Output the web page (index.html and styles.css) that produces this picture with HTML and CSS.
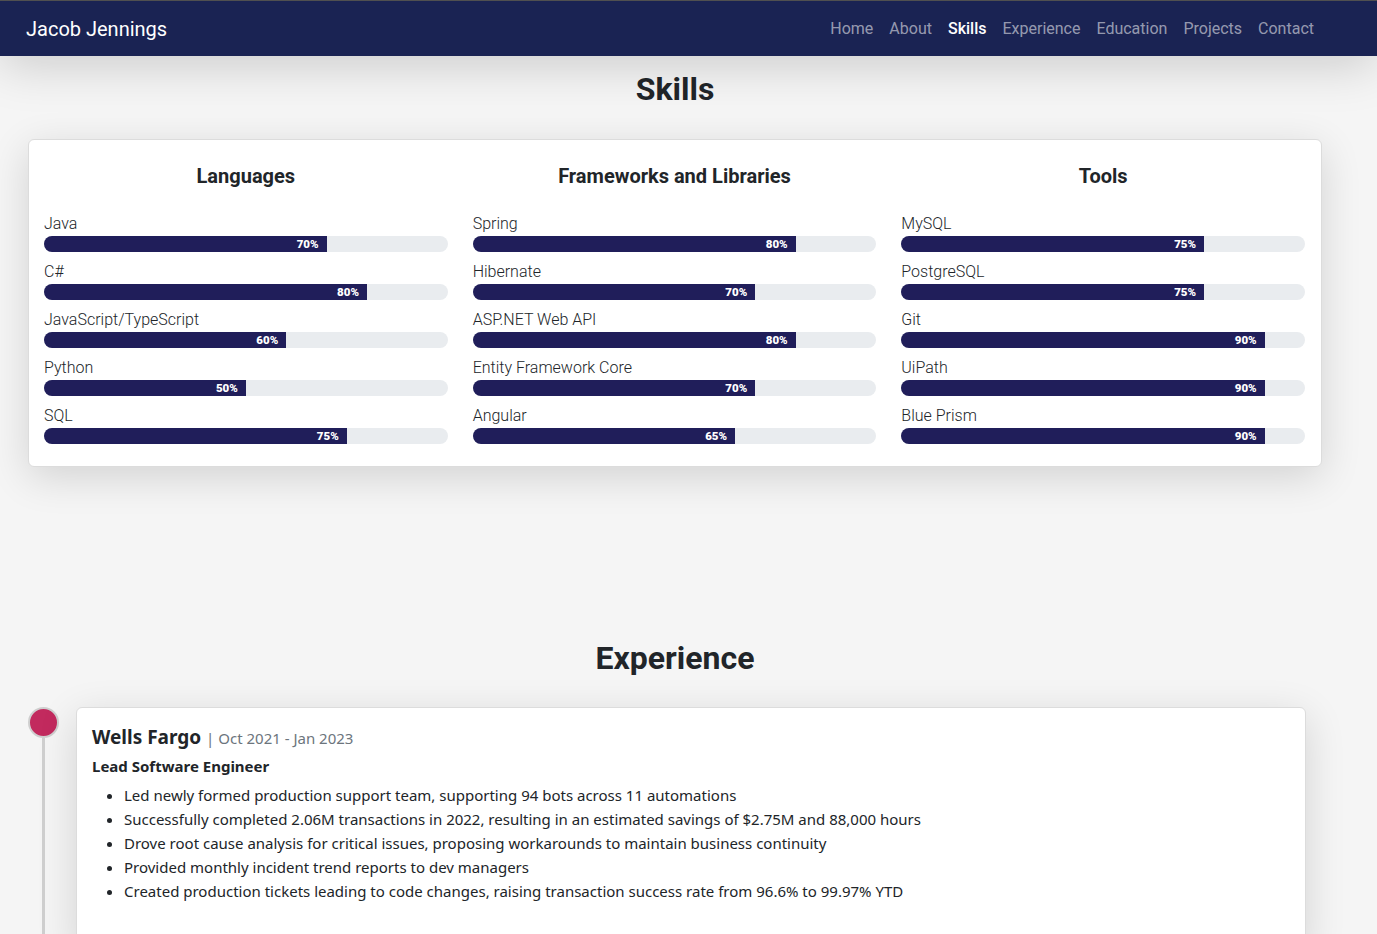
FILE: index.html
```html
<!DOCTYPE html>
<html lang="en">
<head>
<meta charset="utf-8">
<title>Jacob Jennings</title>
<link rel="stylesheet" href="styles.css">
</head>
<body>
<nav class="navbar">
  <a class="brand" href="#">Jacob Jennings</a>
  <ul class="nav-links">
    <li><a href="#">Home</a></li>
    <li><a href="#">About</a></li>
    <li><a class="active" href="#">Skills</a></li>
    <li><a href="#">Experience</a></li>
    <li><a href="#">Education</a></li>
    <li><a href="#">Projects</a></li>
    <li><a href="#">Contact</a></li>
  </ul>
</nav>

<main class="container">
  <section class="skills">
    <h2 class="section-title">Skills</h2>
    <div class="skills-card">
      <div class="skill-col">
        <h3 class="col-title">Languages</h3>
        <div class="skill"><div class="skill-name">Java</div><div class="track"><div class="fill" style="width:70%"><span>70%</span></div></div></div>
        <div class="skill"><div class="skill-name">C#</div><div class="track"><div class="fill" style="width:80%"><span>80%</span></div></div></div>
        <div class="skill"><div class="skill-name">JavaScript/TypeScript</div><div class="track"><div class="fill" style="width:60%"><span>60%</span></div></div></div>
        <div class="skill"><div class="skill-name">Python</div><div class="track"><div class="fill" style="width:50%"><span>50%</span></div></div></div>
        <div class="skill"><div class="skill-name">SQL</div><div class="track"><div class="fill" style="width:75%"><span>75%</span></div></div></div>
      </div>
      <div class="skill-col">
        <h3 class="col-title">Frameworks and Libraries</h3>
        <div class="skill"><div class="skill-name">Spring</div><div class="track"><div class="fill" style="width:80%"><span>80%</span></div></div></div>
        <div class="skill"><div class="skill-name">Hibernate</div><div class="track"><div class="fill" style="width:70%"><span>70%</span></div></div></div>
        <div class="skill"><div class="skill-name">ASP.NET Web API</div><div class="track"><div class="fill" style="width:80%"><span>80%</span></div></div></div>
        <div class="skill"><div class="skill-name">Entity Framework Core</div><div class="track"><div class="fill" style="width:70%"><span>70%</span></div></div></div>
        <div class="skill"><div class="skill-name">Angular</div><div class="track"><div class="fill" style="width:65%"><span>65%</span></div></div></div>
      </div>
      <div class="skill-col">
        <h3 class="col-title">Tools</h3>
        <div class="skill"><div class="skill-name">MySQL</div><div class="track"><div class="fill" style="width:75%"><span>75%</span></div></div></div>
        <div class="skill"><div class="skill-name">PostgreSQL</div><div class="track"><div class="fill" style="width:75%"><span>75%</span></div></div></div>
        <div class="skill"><div class="skill-name">Git</div><div class="track"><div class="fill" style="width:90%"><span>90%</span></div></div></div>
        <div class="skill"><div class="skill-name">UiPath</div><div class="track"><div class="fill" style="width:90%"><span>90%</span></div></div></div>
        <div class="skill"><div class="skill-name">Blue Prism</div><div class="track"><div class="fill" style="width:90%"><span>90%</span></div></div></div>
      </div>
    </div>
  </section>

  <section class="experience">
    <h2 class="section-title">Experience</h2>
    <div class="timeline-item">
      <div class="marker">
        <div class="dot"></div>
        <div class="line"></div>
      </div>
      <div class="exp-card">
        <h4 class="company">Wells Fargo <span class="dates">| Oct 2021 - Jan 2023</span></h4>
        <p class="role">Lead Software Engineer</p>
        <ul class="duties">
          <li>Led newly formed production support team, supporting 94 bots across 11 automations</li>
          <li>Successfully completed 2.06M transactions in 2022, resulting in an estimated savings of $2.75M and 88,000 hours</li>
          <li>Drove root cause analysis for critical issues, proposing workarounds to maintain business continuity</li>
          <li>Provided monthly incident trend reports to dev managers</li>
          <li>Created production tickets leading to code changes, raising transaction success rate from 96.6% to 99.97% YTD</li>
        </ul>
      </div>
    </div>
  </section>
</main>
</body>
</html>
```

FILE: styles.css
```css
* { box-sizing: border-box; }

body {
  margin: 0;
  background: #f5f5f5;
  font-family: Roboto, "Liberation Sans", sans-serif;
  color: #212529;
}

.navbar {
  position: relative;
  z-index: 2;
  height: 56px;
  border-top: 1px solid #505050;
  background: #1a2353;
  display: flex;
  align-items: center;
  justify-content: space-between;
  padding: 0 55px 0 26px;
  box-shadow: 0 8px 50px rgba(0, 0, 0, 0.18);
}

.brand {
  color: #fff;
  font-size: 20px;
  text-decoration: none;
  line-height: 30px;
}

.nav-links {
  list-style: none;
  margin: 0;
  padding: 0;
  display: flex;
}

.nav-links a {
  display: block;
  padding: 0 8px;
  font-size: 16px;
  line-height: 24px;
  color: rgba(255, 255, 255, 0.55);
  text-decoration: none;
}

.nav-links li:first-child a {
  padding-left: 6px;
}

.nav-links a.active {
  color: #fff;
  font-weight: 500;
}

.container {
  width: 1294px;
  margin-left: 28px;
}

.section-title {
  margin: 0;
  text-align: center;
  font-size: 32px;
  line-height: 38px;
  font-weight: 700;
  color: #212529;
}

.skills .section-title {
  padding-top: 14px;
  margin-bottom: 31px;
}

.skills-card {
  background: #fff;
  border: 1px solid #dcdcdc;
  border-radius: 6px;
  box-shadow: 0 10px 40px rgba(0, 0, 0, 0.14);
  padding: 25px 16px 22px 15px;
  display: grid;
  grid-template-columns: repeat(3, 1fr);
  column-gap: 25px;
}

.col-title {
  margin: -1px 0 24px;
  text-align: center;
  font-size: 20px;
  line-height: 24px;
  font-weight: 700;
}

.skill + .skill {
  margin-top: 8px;
}

.skill-name {
  font-size: 16px;
  line-height: 24px;
  font-weight: 300;
}

.track {
  height: 16px;
  background: #e9ecef;
  border-radius: 8px;
  overflow: hidden;
  display: flex;
}

.fill {
  height: 100%;
  background: #201e5a;
  display: flex;
  justify-content: flex-end;
  align-items: center;
  padding-right: 8px;
}

.fill span {
  color: #fff;
  font-size: 11.5px;
  font-weight: 900;
  line-height: 16px;
}

.experience {
  padding-top: 172px;
}

.experience .section-title {
  margin-bottom: 30px;
}

.timeline-item {
  display: flex;
}

.marker {
  width: 48px;
  flex: none;
  display: flex;
  flex-direction: column;
}

.dot {
  width: 31px;
  height: 31px;
  border-radius: 50%;
  background: #c22a5e;
  border: 2px solid #cfcfcf;
}

.line {
  flex: 1;
  width: 3px;
  margin-left: 14px;
  background: #cfcfcf;
}

.exp-card {
  width: 1230px;
  background: #fff;
  border: 1px solid #dcdcdc;
  border-radius: 6px;
  box-shadow: 0 10px 40px rgba(0, 0, 0, 0.14);
  padding: 15px 16px 44px 15px;
  font-family: "Noto Sans", "Open Sans", sans-serif;
  margin-bottom: 60px;
}

.company {
  margin: 0;
  font-size: 19px;
  line-height: 28px;
  font-weight: 700;
  color: #212529;
}

.dates {
  font-size: 15px;
  font-weight: 400;
  color: #6c757d;
}

.role {
  margin: 2px 0 5px;
  font-size: 15px;
  line-height: 24px;
  font-weight: 700;
}

.duties {
  margin: 0;
  padding-left: 32px;
  font-size: 15px;
  line-height: 24px;
}
```
